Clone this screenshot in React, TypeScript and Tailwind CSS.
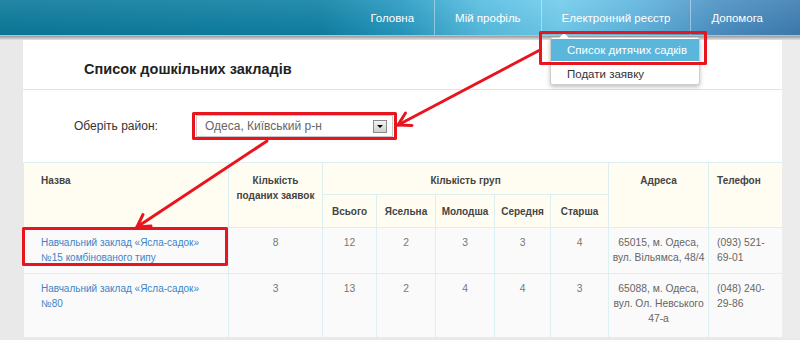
import React from 'react';

const navItems = ['Головна', 'Мій профіль', 'Електронний реєстр', 'Допомога'];

const rows = [
    {
        name: ['Навчальний заклад «Ясла-садок»', '№15 комбінованого типу'],
        nums: [8, 12, 2, 3, 3, 4],
        address: ['65015, м. Одеса,', 'вул. Вільямса, 48/4'],
        phone: ['(093) 521-', '69-01'],
        height: 'h-[46px]',
    },
    {
        name: ['Навчальний заклад «Ясла-садок»', '№80'],
        nums: [3, 13, 2, 4, 4, 3],
        address: ['65088, м. Одеса,', 'вул. Ол. Невського', '47-а'],
        phone: ['(048) 240-', '29-86'],
        height: 'h-[64px]',
    },
];

function Lines({ lines }: { lines: string[] }) {
    return (
        <>
            {lines.map((l, i) => (
                <div key={i}>{l}</div>
            ))}
        </>
    );
}

export default function App() {
    return (
        <div className="relative w-[800px] h-[340px] overflow-hidden bg-[#e9e9e9] font-['Liberation_Sans',Arial,sans-serif]">
            {/* Top navigation */}
            <nav className="h-[36px] border-b border-[#8fd0e2] bg-[linear-gradient(to_bottom,rgba(255,255,255,0.10),rgba(0,0,0,0.04)),linear-gradient(to_right,#0a789a_0%,#0e80a4_40%,#2598c0_50%,#55bce0_60%,#70cbeb_70%,#5eb3de_80%,#4a8fc2_90%,#3c7cb0_100%)] flex justify-end pr-[17px]">
                {navItems.map((item, i) => (
                    <div
                        key={item}
                        className={`h-full flex items-center pt-[3px] px-[20px] text-[11.5px] text-white ${i > 0 ? 'border-l border-white/40' : ''}`}
                    >
                        {item}
                    </div>
                ))}
            </nav>
            <div className="h-[4px] bg-gradient-to-b from-[#9a9a9a] to-[#e3e3e3]" />

            <div className="flex">
                <div className="w-[23px] shrink-0 bg-[#e9e9e9]" />
                <main className="w-[759px] shrink-0 bg-white">
                    {/* Title */}
                    <div className="h-[50px] border-b border-[#e2e2e2] pl-[61px] pt-[19px]">
                        <h1 className="text-[14.5px] leading-[20px] font-bold text-[#222]">Список дошкільних закладів</h1>
                    </div>

                    {/* Filter */}
                    <div className="h-[72px] flex items-center pl-[51px]">
                        <span className="w-[122px] text-[12px] text-[#333]">Оберіть район:</span>
                        <div className="w-[197px] h-[22px] border border-[#c8c8c8] bg-white flex items-center justify-between pl-[8px] pr-[5px]">
                            <span className="text-[12px] text-[#666]">Одеса, Київський р-н</span>
                            <span className="w-[14px] h-[13px] border border-[#8a8a8a] bg-gradient-to-b from-[#f4f4f4] to-[#cfcfcf] flex items-center justify-center">
                                <span className="w-0 h-0 border-x-[3px] border-x-transparent border-t-[3px] border-t-black" />
                            </span>
                        </div>
                    </div>

                    {/* Table */}
                    <table className="w-[759px] table-fixed border-collapse text-[10.3px] leading-[15px]">
                        <colgroup>
                            <col className="w-[205px]" />
                            <col className="w-[94px]" />
                            <col className="w-[54px]" />
                            <col className="w-[59px]" />
                            <col className="w-[59px]" />
                            <col className="w-[56px]" />
                            <col className="w-[58px]" />
                            <col className="w-[100px]" />
                            <col className="w-[74px]" />
                        </colgroup>
                        <thead className="bg-[#fffdf2] text-[#444] text-[10px]">
                            <tr className="h-[32px]">
                                <th rowSpan={2} className="border border-[#dcf0f2] align-top text-left pl-[17px] pt-[10px] font-bold">Назва</th>
                                <th rowSpan={2} className="border border-[#dcf0f2] align-top text-center pt-[10px] font-bold">
                                    Кількість<br />поданих заявок
                                </th>
                                <th colSpan={5} className="border border-[#dcf0f2] align-top text-center pt-[10px] font-bold">Кількість груп</th>
                                <th rowSpan={2} className="border border-[#dcf0f2] align-top text-center pt-[10px] font-bold">Адреса</th>
                                <th rowSpan={2} className="border border-[#dcf0f2] align-top text-left pl-[8px] pt-[10px] font-bold">Телефон</th>
                            </tr>
                            <tr className="h-[33px]">
                                {['Всього', 'Ясельна', 'Молодша', 'Середня', 'Старша'].map((h) => (
                                    <th key={h} className="border border-[#dcf0f2] align-middle text-center font-bold">{h}</th>
                                ))}
                            </tr>
                        </thead>
                        <tbody className="bg-[#fafafa]">
                            {rows.map((r, i) => (
                                <tr key={i} className={r.height}>
                                    <td className="border border-[#dcf0f2] align-top pl-[17px] pt-[7px] text-[10px] text-[#3d85c6]">
                                        <Lines lines={r.name} />
                                    </td>
                                    {r.nums.map((n, j) => (
                                        <td key={j} className="border border-[#dcf0f2] align-top text-center pt-[7px] text-[#777]">{n}</td>
                                    ))}
                                    <td className="border border-[#dcf0f2] align-top text-center pt-[7px] text-[#666]">
                                        <Lines lines={r.address} />
                                    </td>
                                    <td className="border border-[#dcf0f2] align-top text-left pl-[8px] pt-[7px] text-[#666]">
                                        <Lines lines={r.phone} />
                                    </td>
                                </tr>
                            ))}
                        </tbody>
                    </table>
                </main>
                <div className="flex-1 bg-[#ececec]" />
            </div>

            {/* Dropdown menu */}
            <div className="absolute left-[550px] top-[37px] w-[150px] h-[48px] bg-white border border-[#cfcfcf] rounded-[3px] shadow-[0_2px_4px_rgba(0,0,0,0.25)] pt-px">
                <span className="absolute -top-[5px] left-[8px] w-0 h-0 border-x-[5px] border-x-transparent border-b-[5px] border-b-white" />
                <div className="h-[22px] bg-[#5ab6da] text-white text-[11.5px] leading-[22px] pl-[16px]">Список дитячих садків</div>
                <div className="h-[22px] mt-[2px] text-[#333] text-[11.5px] leading-[22px] pl-[16px]">Подати заявку</div>
            </div>

            {/* Annotations */}
            <svg className="absolute inset-0 pointer-events-none" width="800" height="340" viewBox="0 0 800 340">
                <g fill="none" stroke="#e8141e" strokeWidth="3" strokeLinecap="round" strokeLinejoin="round">
                    <rect x="540.5" y="32.5" width="165" height="31" />
                    <rect x="193.5" y="113.5" width="202" height="25" />
                    <rect x="23.5" y="228.5" width="203" height="36" />
                    <path d="M540 50 L398 125" />
                    <path d="M412 125.5 L398 125 L405.5 113" />
                    <path d="M267 141 L137 227" />
                    <path d="M151 226 L137 227 L143 214.5" />
                </g>
            </svg>
        </div>
    );
}
